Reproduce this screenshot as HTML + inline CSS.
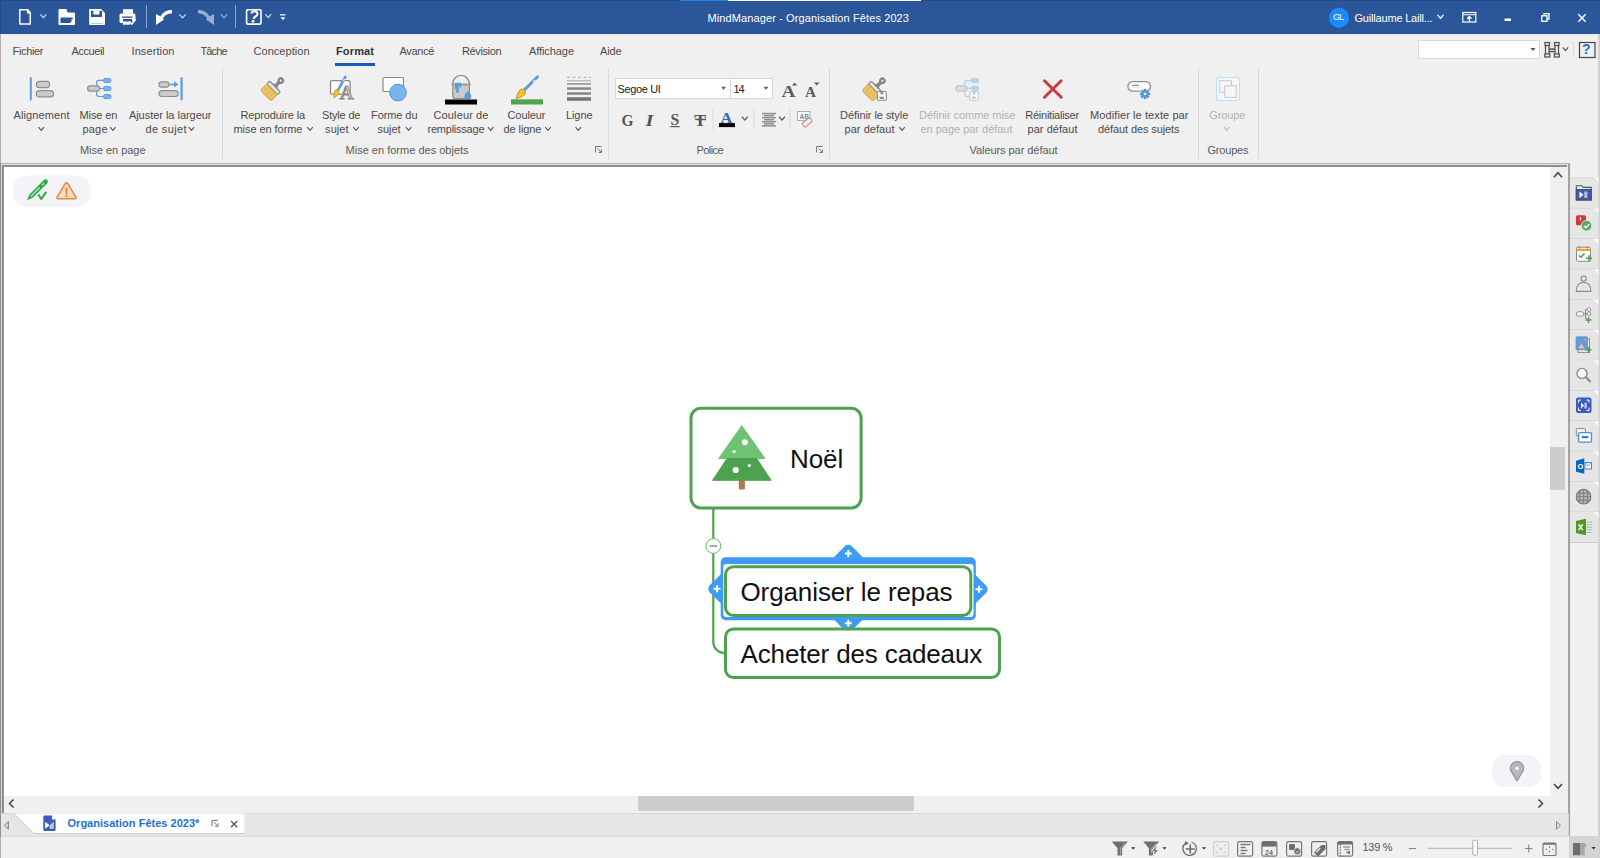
<!DOCTYPE html>
<html><head><meta charset="utf-8"><style>
html,body{margin:0;padding:0;width:1600px;height:858px;overflow:hidden;background:#f0f0f0;}
body{position:relative;font-family:"Liberation Sans",sans-serif;}
.t{position:absolute;white-space:nowrap;font-family:"Liberation Sans",sans-serif;}
.r{position:absolute;}
</style></head><body>
<div class="r" style="left:0px;top:0px;width:1600px;height:34px;background:#2b579a;"></div>
<div class="r" style="left:0px;top:0px;width:1600px;height:1px;background:#244b85;"></div>
<div class="r" style="left:0px;top:0px;width:1px;height:34px;background:#244b85;"></div>
<div class="r" style="left:0px;top:33px;width:1600px;height:1px;background:#28528f;"></div>
<div class="r" style="left:680px;top:0px;width:48px;height:1px;background:#1e88e5;"></div>
<div class="r" style="left:728px;top:0px;width:193px;height:1px;background:#ffffff;"></div>
<div class="r" style="left:0px;top:34px;width:1600px;height:130px;background:#f0f0f0;"></div>
<div class="r" style="left:0px;top:34px;width:1px;height:129px;background:#b0b0b0;"></div>
<div class="r" style="left:1598px;top:34px;width:2px;height:824px;background:#d0d0d0;"></div>
<div class="r" style="left:0px;top:163px;width:1570px;height:1px;background:#b6b6b6;"></div>
<div class="r" style="left:0px;top:164px;width:1569px;height:1px;background:#e2e2e2;"></div>
<div class="r" style="left:0px;top:163px;width:1px;height:674px;background:#909090;"></div>
<div class="r" style="left:0px;top:837px;width:1px;height:21px;background:#b0b0b0;"></div>
<div class="r" style="left:1px;top:164px;width:1px;height:649px;background:#d4d4d4;"></div>
<div class="r" style="left:2px;top:165px;width:1565px;height:2px;background:#8f8f8f;"></div>
<div class="r" style="left:2px;top:165px;width:2px;height:648px;background:#8f8f8f;"></div>
<div class="r" style="left:4px;top:167px;width:1546px;height:629px;background:#ffffff;"></div>
<div class="r" style="left:1550px;top:167px;width:18px;height:629px;background:#f0f0f0;"></div>
<div class="r" style="left:1550px;top:446.5px;width:15px;height:43.0px;background:#cdcdcd;"></div>
<div class="r" style="left:4px;top:796px;width:1564px;height:17px;background:#f0f0f0;"></div>
<div class="r" style="left:638px;top:796px;width:276px;height:15px;background:#cdcdcd;"></div>
<div class="r" style="left:1568px;top:164px;width:2px;height:672px;background:#a0a0a0;"></div>
<div class="r" style="left:1570px;top:34px;width:28px;height:824px;background:#f0f0f0;"></div>
<div class="r" style="left:1px;top:813px;width:1568px;height:23px;background:#e6e6e6;"></div>
<div class="r" style="left:1px;top:836px;width:1568px;height:22px;background:#f0f0f0;"></div>
<div class="r" style="left:1569px;top:836px;width:29px;height:22px;background:#d4d4d4;"></div>
<div class="t" style="left:707.5px;top:12.5px;font-size:11px;line-height:11px;color:#ffffff;letter-spacing:0.11px;">MindManager - Organisation Fêtes 2023</div>
<div class="t" style="left:1354.5px;top:12.5px;font-size:11px;line-height:11px;color:#ffffff;letter-spacing:-0.19px;">Guillaume Laill...</div>
<div class="t" style="left:12.5px;top:46.0px;font-size:11px;line-height:11px;color:#4a4a4a;letter-spacing:-0.33px;">Fichier</div>
<div class="t" style="left:71.5px;top:46.0px;font-size:11px;line-height:11px;color:#4a4a4a;letter-spacing:-0.41px;">Accueil</div>
<div class="t" style="left:131.5px;top:46.0px;font-size:11px;line-height:11px;color:#4a4a4a;letter-spacing:0.10px;">Insertion</div>
<div class="t" style="left:200.5px;top:46.0px;font-size:11px;line-height:11px;color:#4a4a4a;letter-spacing:-0.89px;">Tâche</div>
<div class="t" style="left:253.5px;top:46.0px;font-size:11px;line-height:11px;color:#4a4a4a;letter-spacing:0.04px;">Conception</div>
<div class="t" style="left:399.5px;top:46.0px;font-size:11px;line-height:11px;color:#4a4a4a;letter-spacing:-0.30px;">Avancé</div>
<div class="t" style="left:462.0px;top:46.0px;font-size:11px;line-height:11px;color:#4a4a4a;letter-spacing:-0.38px;">Révision</div>
<div class="t" style="left:529.0px;top:46.0px;font-size:11px;line-height:11px;color:#4a4a4a;letter-spacing:-0.08px;">Affichage</div>
<div class="t" style="left:600.0px;top:46.0px;font-size:11px;line-height:11px;color:#4a4a4a;letter-spacing:-0.17px;">Aide</div>
<div class="t" style="left:336.0px;top:46.0px;font-size:11px;line-height:11px;color:#333333;letter-spacing:0.14px;font-weight:bold;">Format</div>
<div class="r" style="left:335px;top:63px;width:40px;height:3px;background:#185abd;"></div>
<div class="t" style="left:13.5px;top:109.5px;font-size:11px;line-height:11px;color:#4a4a4a;letter-spacing:0.11px;">Alignement</div>
<div class="t" style="left:79.5px;top:109.5px;font-size:11px;line-height:11px;color:#4a4a4a;letter-spacing:-0.09px;">Mise en</div>
<div class="t" style="left:128.9px;top:109.5px;font-size:11px;line-height:11px;color:#4a4a4a;letter-spacing:-0.03px;">Ajuster la largeur</div>
<div class="t" style="left:240.5px;top:109.5px;font-size:11px;line-height:11px;color:#4a4a4a;letter-spacing:-0.12px;">Reproduire la</div>
<div class="t" style="left:322.0px;top:109.5px;font-size:11px;line-height:11px;color:#4a4a4a;letter-spacing:-0.18px;">Style de</div>
<div class="t" style="left:371.0px;top:109.5px;font-size:11px;line-height:11px;color:#4a4a4a;letter-spacing:-0.08px;">Forme du</div>
<div class="t" style="left:433.5px;top:109.5px;font-size:11px;line-height:11px;color:#4a4a4a;letter-spacing:0.13px;">Couleur de</div>
<div class="t" style="left:507.5px;top:109.5px;font-size:11px;line-height:11px;color:#4a4a4a;letter-spacing:-0.09px;">Couleur</div>
<div class="t" style="left:566.0px;top:109.5px;font-size:11px;line-height:11px;color:#4a4a4a;letter-spacing:-0.10px;">Ligne</div>
<div class="t" style="left:840.1px;top:109.5px;font-size:11px;line-height:11px;color:#4a4a4a;letter-spacing:-0.06px;">Définir le style</div>
<div class="t" style="left:1025.3px;top:109.5px;font-size:11px;line-height:11px;color:#4a4a4a;letter-spacing:-0.25px;">Réinitialiser</div>
<div class="t" style="left:1090.1px;top:109.5px;font-size:11px;line-height:11px;color:#4a4a4a;letter-spacing:0.09px;">Modifier le texte par</div>
<div class="t" style="left:919.1px;top:109.5px;font-size:11px;line-height:11px;color:#b0b0b0;letter-spacing:-0.05px;">Définir comme mise</div>
<div class="t" style="left:1209.2px;top:109.5px;font-size:11px;line-height:11px;color:#b0b0b0;letter-spacing:-0.08px;">Groupe</div>
<div class="t" style="left:82.5px;top:123.5px;font-size:11px;line-height:11px;color:#4a4a4a;letter-spacing:0.18px;">page</div>
<div class="t" style="left:145.5px;top:123.5px;font-size:11px;line-height:11px;color:#4a4a4a;letter-spacing:0.35px;">de sujet</div>
<div class="t" style="left:233.5px;top:123.5px;font-size:11px;line-height:11px;color:#4a4a4a;letter-spacing:-0.06px;">mise en forme</div>
<div class="t" style="left:325.1px;top:123.5px;font-size:11px;line-height:11px;color:#4a4a4a;letter-spacing:0.04px;">sujet</div>
<div class="t" style="left:377.5px;top:123.5px;font-size:11px;line-height:11px;color:#4a4a4a;letter-spacing:-0.06px;">sujet</div>
<div class="t" style="left:427.5px;top:123.5px;font-size:11px;line-height:11px;color:#4a4a4a;letter-spacing:-0.23px;">remplissage</div>
<div class="t" style="left:503.5px;top:123.5px;font-size:11px;line-height:11px;color:#4a4a4a;letter-spacing:-0.08px;">de ligne</div>
<div class="t" style="left:844.5px;top:123.5px;font-size:11px;line-height:11px;color:#4a4a4a;letter-spacing:0.05px;">par defaut</div>
<div class="t" style="left:1027.5px;top:123.5px;font-size:11px;line-height:11px;color:#4a4a4a;letter-spacing:0.05px;">par défaut</div>
<div class="t" style="left:1098.1px;top:123.5px;font-size:11px;line-height:11px;color:#4a4a4a;letter-spacing:-0.11px;">défaut des sujets</div>
<div class="t" style="left:920.5px;top:123.5px;font-size:11px;line-height:11px;color:#b0b0b0;letter-spacing:-0.02px;">en page par défaut</div>
<div class="t" style="left:80.0px;top:144.8px;font-size:11px;line-height:11px;color:#5a5a5a;letter-spacing:-0.05px;">Mise en page</div>
<div class="t" style="left:345.5px;top:144.8px;font-size:11px;line-height:11px;color:#5a5a5a;letter-spacing:0.01px;">Mise en forme des objets</div>
<div class="t" style="left:696.5px;top:144.8px;font-size:11px;line-height:11px;color:#5a5a5a;letter-spacing:-0.59px;">Police</div>
<div class="t" style="left:969.5px;top:144.8px;font-size:11px;line-height:11px;color:#5a5a5a;letter-spacing:-0.06px;">Valeurs par défaut</div>
<div class="t" style="left:1207.5px;top:144.8px;font-size:11px;line-height:11px;color:#5a5a5a;letter-spacing:-0.20px;">Groupes</div>
<div class="r" style="left:222px;top:68px;width:1px;height:91px;background:#dadada;"></div>
<div class="r" style="left:608px;top:68px;width:1px;height:91px;background:#dadada;"></div>
<div class="r" style="left:829px;top:68px;width:1px;height:91px;background:#dadada;"></div>
<div class="r" style="left:1198px;top:68px;width:1px;height:91px;background:#dadada;"></div>
<div class="r" style="left:1258px;top:68px;width:1px;height:91px;background:#dadada;"></div>
<svg style="position:absolute;left:0;top:0" width="1600" height="858" viewBox="0 0 1600 858"><path d="M19.75,9.75 H27.6 L30.25,12.6 V24 H19.75 Z" fill="none" stroke="#fff" stroke-width="1.5" stroke-linejoin="round"/>
<path d="M27,9.5 V13.5 H31 Z" fill="#fff"/>
<path d="M40.3,14.3 L43.3,17.7 L46.3,14.3" fill="none" stroke="#d6e0f0" stroke-width="1.1"/>
<path d="M58.5,10 Q58.5,9 59.5,9 H66.5 L67.5,12.5 H74 Q75,12.5 75,13.5 V24 Q75,25 74,25 H59.5 Q58.5,25 58.5,24 Z" fill="#fff"/>
<path d="M60.5,17.5 H72 Q73,17.5 73,19 L71,19.5 L72,21 L70,23 H60.5 Z" fill="#2b579a"/>
<path d="M70.5,22.5 L73.5,20 V23 Z" fill="#fff"/>
<path d="M89.2,9.5 Q89.2,9 90,9 H101 L105,13 V24 Q105,25 104,25 H90 Q89.2,25 89.2,24 Z" fill="#fff"/>
<rect x="91" y="10.8" width="11" height="6.2" fill="#2b579a"/>
<rect x="93.3" y="10.8" width="6.2" height="3.8" rx="0.8" fill="#fff"/>
<rect x="91" y="23" width="12.2" height="0.7" fill="#9fb3d6"/>
<rect x="123" y="9.2" width="10" height="4.5" fill="#fff"/>
<path d="M119.5,15 Q119.5,13.5 121,13.5 H134 Q135.5,13.5 135.5,15 V21 H132 V19 H123 V23 H121 Q119.5,23 119.5,21.5 Z" fill="#fff"/>
<rect x="122" y="16.5" width="10.5" height="1.3" fill="#2b579a"/>
<rect x="123" y="21.5" width="7" height="3.2" fill="#fff"/>
<path d="M129.5,21.5 L131.8,24 L135.5,19.5" fill="none" stroke="#fff" stroke-width="1.7"/>
<rect x="146" y="5" width="1" height="23" fill="#8aa3cc"/>
<rect x="235" y="5" width="1" height="23" fill="#8aa3cc"/>
<path d="M172,10 C166.5,10 162.5,12.5 160.5,16.5 L156,14 V25 L164,19.5 L162.8,18.6 C164.5,15.5 167.5,13.3 172,13.3 Z" fill="#fff"/>
<path d="M179.3,14.3 L182.55,17.900000000000002 L185.8,14.3" fill="none" stroke="#d6e0f0" stroke-width="1.1"/>
<path d="M198,10 C203.5,10 207.5,12.5 209.5,16.5 L214,14 V25 L206,19.5 L207.2,18.6 C205.5,15.5 202.5,13.3 198,13.3 Z" fill="#98aed3"/>
<path d="M221,14.3 L224.1,17.900000000000002 L227.2,14.3" fill="none" stroke="#98aed3" stroke-width="1.1"/>
<rect x="246.6" y="9.7" width="14.4" height="14.4" rx="1" fill="none" stroke="#fff" stroke-width="1.6"/>
<path d="M251.3,13.5 Q252,11.3 254.5,11.3 Q257.5,11.3 257.5,13.8 Q257.5,15.5 255.5,16.5 Q254,17.3 253.5,19" fill="none" stroke="#fff" stroke-width="2"/>
<circle cx="253" cy="21.3" r="1.4" fill="#fff"/>
<path d="M265.3,14.2 L268.2,17.599999999999998 L271.1,14.2" fill="none" stroke="#d6e0f0" stroke-width="1.1"/>
<rect x="280" y="14.2" width="5.5" height="1.2" fill="#fff"/>
<path d="M280.5,17.3 H285.3 L282.9,20.2 Z" fill="#fff"/>
<circle cx="1339" cy="17.8" r="10" fill="#1a8cff"/>
<path d="M1437.5,14.8 L1440.5,18.400000000000002 L1443.5,14.8" fill="none" stroke="#e6ecf5" stroke-width="1.4"/>
<rect x="1462.8" y="12.5" width="13" height="9.5" fill="none" stroke="#fff" stroke-width="1.2"/>
<rect x="1462.8" y="14.2" width="13" height="1" fill="#fff"/>
<path d="M1469.3,21.5 V16.8 M1467.2,18.8 L1469.3,16.4 L1471.4,18.8" fill="none" stroke="#fff" stroke-width="1.3"/>
<rect x="1504.5" y="18.5" width="6.5" height="2.5" fill="#fff"/>
<rect x="1541.7" y="15.8" width="5.3" height="5.5" fill="none" stroke="#fff" stroke-width="1.3"/>
<path d="M1544,15.3 V13.7 H1549 V19 H1547.5" fill="none" stroke="#fff" stroke-width="1.3"/>
<path d="M1578.3,14.3 L1585.7,21.7 M1585.7,14.3 L1578.3,21.7" stroke="#fff" stroke-width="1.5"/>
<rect x="1418.5" y="40.5" width="121" height="18" fill="#fff" stroke="#d9d9d9" stroke-width="1"/>
<path d="M1530.5,48 H1535.5 L1533,51 Z" fill="#555"/>
<g fill="none" stroke="#555" stroke-width="1.3"><rect x="1545" y="42.5" width="4.5" height="3"/><rect x="1554.5" y="42.5" width="4.5" height="3"/><path d="M1545.5,45.5 V54 M1549,45.5 V54 M1555,45.5 V54 M1558.5,45.5 V54"/><rect x="1544.8" y="54" width="5" height="3"/><rect x="1554.3" y="54" width="5" height="3"/><path d="M1549,49 H1555 M1549,51.5 H1555"/></g>
<path d="M1562.8,47.3 L1565.5,50.599999999999994 L1568.2,47.3" fill="none" stroke="#555" stroke-width="1.2"/>
<rect x="1573" y="42" width="1" height="16" fill="#dcdcdc"/>
<rect x="1579.5" y="42.5" width="15.5" height="15" fill="none" stroke="#444" stroke-width="1.2"/>
<path d="M38.5,127.2 L41.25,130.4 L44.0,127.2" fill="none" stroke="#555" stroke-width="1.1"/>
<path d="M110.2,127.2 L112.95,130.4 L115.7,127.2" fill="none" stroke="#555" stroke-width="1.1"/>
<path d="M188.8,127.2 L191.55,130.4 L194.3,127.2" fill="none" stroke="#555" stroke-width="1.1"/>
<path d="M307.3,127.2 L310.05,130.4 L312.8,127.2" fill="none" stroke="#555" stroke-width="1.1"/>
<path d="M353.2,127.2 L355.95,130.4 L358.7,127.2" fill="none" stroke="#555" stroke-width="1.1"/>
<path d="M405.8,127.2 L408.55,130.4 L411.3,127.2" fill="none" stroke="#555" stroke-width="1.1"/>
<path d="M488,127.2 L490.75,130.4 L493.5,127.2" fill="none" stroke="#555" stroke-width="1.1"/>
<path d="M545.2,127.2 L547.95,130.4 L550.7,127.2" fill="none" stroke="#555" stroke-width="1.1"/>
<path d="M575.5,127.2 L578.25,130.4 L581.0,127.2" fill="none" stroke="#555" stroke-width="1.1"/>
<path d="M899.3,127.2 L902.05,130.4 L904.8,127.2" fill="none" stroke="#555" stroke-width="1.1"/>
<path d="M1224,127.2 L1226.75,130.4 L1229.5,127.2" fill="none" stroke="#b5b5b5" stroke-width="1.1"/>
<rect x="29.8" y="77" width="2" height="23.5" rx="1" fill="#5b9be0"/>
<rect x="36.3" y="81.4" width="13.3" height="6.2" rx="3.1" fill="#cbcbcb" stroke="#8e8e8e" stroke-width="1.2"/>
<rect x="36.3" y="90.6" width="17.3" height="6.2" rx="3.1" fill="#cbcbcb" stroke="#8e8e8e" stroke-width="1.2"/>
<path d="M103.5,80.3 H99 Q96.6,80.3 96.6,82.7 V94.1 Q96.6,96.5 99,96.5 H103.5 M99.5,88.5 H103.5" fill="none" stroke="#5b9be0" stroke-width="1.2"/>
<rect x="87.6" y="85.8" width="12" height="5.4" rx="2.7" fill="#cbcbcb" stroke="#8e8e8e" stroke-width="1.2"/>
<rect x="103.6" y="78.5" width="7.3" height="4" rx="1.5" fill="#7ab4ea" stroke="#5b9be0" stroke-width="1"/>
<rect x="103.6" y="86.6" width="7.3" height="4" rx="1.5" fill="#7ab4ea" stroke="#5b9be0" stroke-width="1"/>
<rect x="103.6" y="94.6" width="7.3" height="4" rx="1.5" fill="#7ab4ea" stroke="#5b9be0" stroke-width="1"/>
<rect x="159" y="81.8" width="10" height="5.4" rx="2.7" fill="#cbcbcb" stroke="#8e8e8e" stroke-width="1.2"/>
<rect x="159" y="90.7" width="19.2" height="5.8" rx="2.9" fill="#cbcbcb" stroke="#8e8e8e" stroke-width="1.2"/>
<path d="M169.5,84.5 H175" stroke="#5b9be0" stroke-width="1.6"/><path d="M174,81.3 L178.5,84.5 L174,87.5 Z" fill="#5b9be0"/>
<rect x="180.5" y="77.3" width="2.2" height="23.2" rx="1" fill="#5b9be0"/>
<g transform="translate(280.8,80.6) rotate(45)"><circle cx="0" cy="0" r="3.3" fill="#858585"/><circle cx="0" cy="0" r="1.1" fill="#f0f0f0"/><path d="M-1.7,2.5 V5.5 Q-1.7,7.8 -6,8.3 H6 Q1.7,7.8 1.7,5.5 V2.5 Z" fill="#858585"/><rect x="-7.6" y="8.2" width="15.2" height="4" rx="1" fill="#e4e4e4" stroke="#858585" stroke-width="1.2"/><path d="M-7.6,12.5 H7.6 V20.3 Q6,22 4,21 Q2,22.3 0,21 Q-2,22.3 -4,21 Q-6,22 -7.6,20.3 Z" fill="#edc265" stroke="#cf9b3e" stroke-width="0.9"/><path d="M-4,14.5 V18 M0,15 V19 M3.5,14.5 V18" stroke="#d4a24a" stroke-width="0.6"/></g>
<rect x="330.5" y="80.6" width="19.6" height="13.6" rx="1.5" fill="#fff" stroke="#8a8a8a" stroke-width="1.3"/>
<text x="339.6" y="98.6" font-family="Liberation Serif" font-size="19" fill="#fff" stroke="#8a8a8a" stroke-width="1.1" textLength="14.2" lengthAdjust="spacingAndGlyphs">A</text>
<path d="M345.3,76.8 L338.2,89.8" stroke="#5b9be0" stroke-width="2.6" stroke-linecap="round"/>
<path d="M343.4,79.6 L344.6,80.4" stroke="#fff" stroke-width="2"/>
<path d="M336.8,89.5 Q339.5,90.5 338.8,92.8 Q337.5,96 334,97.8 Q333.5,93.5 334.6,91 Q335.3,89.5 336.8,89.5 Z" fill="#f2c230" stroke="#c9901e" stroke-width="0.8"/>
<rect x="383" y="77.5" width="20.5" height="14" rx="1.5" fill="#fff" stroke="#8a8a8a" stroke-width="1.2"/>
<circle cx="398" cy="92.6" r="8.3" fill="#7ab4ea" stroke="#4a90e2" stroke-width="1"/>
<path d="M452.6,84.5 A8.4,9.2 0 0 1 469.4,84.5" fill="none" stroke="#8a8a8a" stroke-width="1.3"/>
<path d="M452.8,84.5 H469.4 V96 Q469.4,98.5 467,98.5 H455.2 Q452.8,98.5 452.8,96 Z" fill="#cbcbcb" stroke="#8a8a8a" stroke-width="1.2"/>
<rect x="451.3" y="83.6" width="19.6" height="1.8" rx="0.9" fill="#9a9a9a"/>
<path d="M455,82.8 H461.2 V88.3 H460 V86.3 H458.8 V92.8 H456.2 V89 H455 Z" fill="#5b9be0"/>
<path d="M467.8,90.8 Q471.3,94.3 471.3,96 A3.5,3.5 0 0 1 464.3,96 Q464.3,94.3 467.8,90.8 Z" fill="#5b9be0"/>
<rect x="445" y="99.5" width="32" height="5" fill="#000"/>
<path d="M537.6,76.8 L524.2,90" stroke="#5b9be0" stroke-width="3" stroke-linecap="round"/>
<path d="M533.6,80.7 L535.2,82.2" stroke="#e0e0e0" stroke-width="3.2"/>
<path d="M522.3,88.8 Q526.5,90.3 525.5,93.2 Q524,96.8 516.2,98.6 Q516.5,94.5 518.8,91.5 Q520.3,89 522.3,88.8 Z" fill="#f2c230" stroke="#c9901e" stroke-width="0.9"/>
<rect x="511" y="99.3" width="32" height="5.2" fill="#4fa64f"/>
<path d="M567,77.3 H591" stroke="#b0b0b0" stroke-width="1" stroke-dasharray="3,2.5"/>
<rect x="567" y="80.3" width="24" height="1" fill="#a8a8a8"/>
<rect x="567" y="83" width="24" height="1.8" fill="#a0a0a0"/>
<rect x="567" y="87.3" width="24" height="2.5" fill="#888"/>
<rect x="567" y="92.2" width="24" height="2.6" fill="#888"/>
<rect x="567" y="97.2" width="24" height="3.6" fill="#777"/>
<path d="M595.5,152.5 V146.5 H601.5" fill="none" stroke="#777" stroke-width="1"/><path d="M597.5,148.5 L601.5,152.5 M601.5,149.5 V152.5 H598.5" fill="none" stroke="#777" stroke-width="1"/>
<path d="M816.5,152.5 V146.5 H822.5" fill="none" stroke="#777" stroke-width="1"/><path d="M818.5,148.5 L822.5,152.5 M822.5,149.5 V152.5 H819.5" fill="none" stroke="#777" stroke-width="1"/>
<rect x="615.5" y="78.5" width="115" height="20" fill="#fff" stroke="#d6d6d6" stroke-width="1"/>
<rect x="730.5" y="78.5" width="42" height="20" fill="#fff" stroke="#d6d6d6" stroke-width="1"/>
<path d="M721.2,86.8 H726 L723.6,89.9 Z" fill="#666"/>
<path d="M763.6,86.8 H768.4 L766,89.9 Z" fill="#666"/>
<text x="781.5" y="96.8" font-family="Liberation Serif" font-weight="bold" font-size="16" fill="#5a5a5a" textLength="14" lengthAdjust="spacingAndGlyphs">A</text>
<path d="M792,85.6 L794.6,82.6 L797.2,85.6 Z" fill="#5a5a5a"/>
<text x="805" y="96.8" font-family="Liberation Serif" font-weight="bold" font-size="14.5" fill="#5a5a5a" textLength="11" lengthAdjust="spacingAndGlyphs">A</text>
<path d="M814,82.6 H819.6 L816.8,85.4 Z" fill="#5a5a5a"/>
<text x="621.5" y="125.6" font-family="Liberation Serif" font-weight="bold" font-size="17.5" fill="#555" textLength="12" lengthAdjust="spacingAndGlyphs">G</text>
<text x="645.5" y="125.6" font-family="Liberation Serif" font-weight="bold" font-style="italic" font-size="17.5" fill="#555" textLength="8" lengthAdjust="spacingAndGlyphs">I</text>
<text x="670.5" y="125.3" font-family="Liberation Serif" font-weight="bold" font-size="17" fill="#555" textLength="8.8" lengthAdjust="spacingAndGlyphs">S</text>
<rect x="670.3" y="126" width="9.3" height="1.2" fill="#555"/>
<text x="694.3" y="125.6" font-family="Liberation Serif" font-weight="bold" font-size="17.5" fill="#555" textLength="11.8" lengthAdjust="spacingAndGlyphs">T</text>
<rect x="695" y="118.7" width="11" height="1.5" fill="#2e5fa0"/>
<rect x="712.5" y="108" width="1" height="22" fill="#dcdcdc"/>
<text x="720.5" y="122.6" font-family="Liberation Serif" font-weight="bold" font-size="15.5" fill="#2b6cb5" textLength="11.8" lengthAdjust="spacingAndGlyphs">A</text>
<rect x="719" y="123.1" width="16" height="4" fill="#000"/>
<path d="M741.8,116.7 L744.8,120.0 L747.8,116.7" fill="none" stroke="#555" stroke-width="1.2"/>
<rect x="753.3" y="108" width="1" height="22" fill="#dcdcdc"/>
<rect x="762" y="112.8" width="14" height="1.5" fill="#8d8d8d"/>
<rect x="764" y="114.85" width="10" height="1.5" fill="#8d8d8d"/>
<rect x="762" y="116.89999999999999" width="14" height="1.5" fill="#8d8d8d"/>
<rect x="764" y="118.95" width="10" height="1.5" fill="#8d8d8d"/>
<rect x="762" y="121.0" width="14" height="1.5" fill="#8d8d8d"/>
<rect x="764" y="123.05" width="10" height="1.5" fill="#8d8d8d"/>
<rect x="762" y="125.1" width="14" height="1.5" fill="#8d8d8d"/>
<path d="M779,116.7 L782.0,120.0 L785,116.7" fill="none" stroke="#555" stroke-width="1.2"/>
<rect x="789.3" y="108" width="1" height="22" fill="#dcdcdc"/>
<rect x="797.5" y="111.5" width="12.5" height="9" fill="#fff" stroke="#9fb0b8" stroke-width="1"/>
<text x="799.5" y="118.5" font-family="Liberation Sans" font-size="6.5" fill="#5a8ab5" font-weight="bold">AB</text>
<g transform="translate(807,122.5) rotate(-40)"><rect x="-5" y="-2.5" width="10" height="5" rx="1.5" fill="#fbe9ea" stroke="#c88084" stroke-width="1"/></g>
<g transform="translate(882.4,80.8) rotate(45)"><circle cx="0" cy="0" r="3.3" fill="#858585"/><circle cx="0" cy="0" r="1.1" fill="#f0f0f0"/><path d="M-1.7,2.5 V5.5 Q-1.7,7.8 -6,8.3 H6 Q1.7,7.8 1.7,5.5 V2.5 Z" fill="#858585"/><rect x="-7.6" y="8.2" width="15.2" height="4" rx="1" fill="#e4e4e4" stroke="#858585" stroke-width="1.2"/><path d="M-7.6,12.5 H7.6 V20.3 Q6,22 4,21 Q2,22.3 0,21 Q-2,22.3 -4,21 Q-6,22 -7.6,20.3 Z" fill="#edc265" stroke="#cf9b3e" stroke-width="0.9"/><path d="M-4,14.5 V18 M0,15 V19 M3.5,14.5 V18" stroke="#d4a24a" stroke-width="0.6"/></g>
<rect x="877.3" y="91.5" width="9" height="8.8" rx="1.2" fill="#fff" stroke="#8a8a8a" stroke-width="1.1"/>
<rect x="880.5" y="91.5" width="2.6" height="2.8" fill="#8a8a8a"/>
<rect x="879.3" y="96.7" width="5" height="2.2" rx="1.1" fill="#8a8a8a"/>
<path d="M971,80.6 H967 Q964.6,80.6 964.6,83 V94.3 Q964.6,96.6 967,96.6 H970" fill="none" stroke="#b3d3f2" stroke-width="1.2"/><path d="M967.5,88.3 H971" stroke="#b3d3f2" stroke-width="1.2"/>
<rect x="955.8" y="85.8" width="11.2" height="5.4" rx="2.7" fill="#dedede" stroke="#c6c6c6" stroke-width="1.2"/>
<rect x="971.3" y="78.3" width="7.3" height="4.3" rx="1.8" fill="#b5d4f0" stroke="#a8cbef" stroke-width="0.8"/>
<rect x="971.3" y="86.2" width="7.3" height="4.3" rx="1.8" fill="#b5d4f0" stroke="#a8cbef" stroke-width="0.8"/>
<rect x="969.7" y="91.8" width="8.6" height="8.4" rx="1.2" fill="#fff" stroke="#c8c8c8" stroke-width="1.1"/>
<rect x="972.7" y="91.8" width="2.6" height="2.8" fill="#c8c8c8"/>
<rect x="971.7" y="96.60000000000001" width="4.6" height="2.2" rx="1.1" fill="#c8c8c8"/>
<path d="M1044.5,80.8 L1061.2,97.3 M1061.2,80.8 L1044.5,97.3" stroke="#d0393b" stroke-width="3" stroke-linecap="round"/>
<rect x="1127.9" y="81.6" width="22.6" height="9.6" rx="4.8" fill="#fff" stroke="#8d8d8d" stroke-width="1.3"/>
<rect x="1132" y="84.7" width="7" height="1.3" rx="0.6" fill="#5b9be0"/><rect x="1132" y="86.9" width="9.5" height="0.6" fill="#d0d0d0"/>
<circle cx="1145" cy="94" r="5.6" fill="#f0f0f0"/>
<g transform="translate(1145,94)" fill="#5596db"><rect x="-1.25" y="-5.1" width="2.5" height="3" transform="rotate(0)"/><rect x="-1.25" y="-5.1" width="2.5" height="3" transform="rotate(45)"/><rect x="-1.25" y="-5.1" width="2.5" height="3" transform="rotate(90)"/><rect x="-1.25" y="-5.1" width="2.5" height="3" transform="rotate(135)"/><rect x="-1.25" y="-5.1" width="2.5" height="3" transform="rotate(180)"/><rect x="-1.25" y="-5.1" width="2.5" height="3" transform="rotate(225)"/><rect x="-1.25" y="-5.1" width="2.5" height="3" transform="rotate(270)"/><rect x="-1.25" y="-5.1" width="2.5" height="3" transform="rotate(315)"/><circle r="3.4"/></g><circle cx="1145" cy="94" r="1.3" fill="#f0f0f0"/>
<rect x="1216.5" y="77.5" width="23" height="23" rx="3" fill="#f6f6f6" stroke="#b6e3f3" stroke-width="1.1"/>
<rect x="1219.7" y="80.7" width="11.6" height="11.6" fill="#f6f6f6" stroke="#c8c8c8" stroke-width="1"/>
<rect x="1224.7" y="85.8" width="11.6" height="11.6" fill="#f6f6f6" stroke="#c8c8c8" stroke-width="1"/>
<rect x="691" y="408.2" width="170.1" height="99.9" rx="10" fill="#fff" stroke="#4ea24f" stroke-width="3"/>
<path d="M741.8,425.7 L765,458.5 H718.7 Z" fill="#6fc273" stroke="#6fc273" stroke-width="1" stroke-linejoin="round"/>
<path d="M727,458.5 H756.7 L771.1,480.3 H712.6 Z" fill="#4ea24f" stroke="#4ea24f" stroke-width="1" stroke-linejoin="round"/>
<rect x="738.8" y="480" width="6.1" height="9.5" rx="1.2" fill="#a97c50"/>
<circle cx="744.9" cy="442.3" r="3" fill="#fff"/>
<circle cx="734.1" cy="451.6" r="1.6" fill="#fff"/>
<circle cx="735.7" cy="470" r="3.1" fill="#fff"/>
<circle cx="749.4" cy="465.5" r="1.6" fill="#fff"/>
<path d="M713.3,509 V642 A11,11 0 0 0 724.3,653 H726" fill="none" stroke="#4ea24f" stroke-width="2.2"/>
<rect x="720.7" y="557.3" width="255.1" height="62.9" rx="5" fill="#3d9af5"/>
<rect x="723.3" y="564.1" width="250.2" height="53" rx="3" fill="#fff"/>
<rect x="725.5" y="566.7" width="245.3" height="48.8" rx="8" fill="#fff" stroke="#4ea24f" stroke-width="3"/>
<g transform="translate(848.3,553.5) rotate(0)"><path d="M-15,4.3 L-3.5,-7.3 Q0,-10.2 3.5,-7.3 L15,4.3 Z" fill="#3d9af5"/><path d="M-3.5,0 H3.5 M0,-3.5 V3.5" stroke="#fff" stroke-width="2"/></g>
<g transform="translate(848.3,623.2) rotate(180)"><path d="M-15,4.3 L-3.5,-7.3 Q0,-10.2 3.5,-7.3 L15,4.3 Z" fill="#3d9af5"/><path d="M-3.5,0 H3.5 M0,-3.5 V3.5" stroke="#fff" stroke-width="2"/></g>
<g transform="translate(717,588.8) rotate(-90)"><path d="M-15,4.3 L-3.5,-7.3 Q0,-10.2 3.5,-7.3 L15,4.3 Z" fill="#3d9af5"/><path d="M-3.5,0 H3.5 M0,-3.5 V3.5" stroke="#fff" stroke-width="2"/></g>
<g transform="translate(979,589.3) rotate(90)"><path d="M-15,4.3 L-3.5,-7.3 Q0,-10.2 3.5,-7.3 L15,4.3 Z" fill="#3d9af5"/><path d="M-3.5,0 H3.5 M0,-3.5 V3.5" stroke="#fff" stroke-width="2"/></g>
<circle cx="713.4" cy="546" r="7.4" fill="#fff" stroke="#66b866" stroke-width="1"/>
<path d="M709.6,546 H717.2" stroke="#7a7a7a" stroke-width="1.3"/>
<rect x="725.5" y="628.9" width="274" height="48.6" rx="8" fill="#fff" stroke="#4ea24f" stroke-width="3"/>
<rect x="12" y="175.6" width="79" height="31.6" rx="15.8" fill="#f3f3f8"/>
<g transform="translate(45.6,181.6) rotate(45)"><path d="M-2.3,0 A2.3,2.3 0 0 1 2.3,0 V20.5 L0,26.5 L-2.3,20.5 Z" fill="#2eaa44"/><rect x="-0.7" y="8.5" width="1.4" height="12.5" fill="#b5e8bd"/><rect x="-0.7" y="2.5" width="1.4" height="2.5" fill="#b5e8bd"/></g>
<path d="M38.7,195 L41.3,198.8 L45.8,192.6" fill="none" stroke="#2eaa44" stroke-width="2.1" stroke-linecap="round" stroke-linejoin="round"/>
<path d="M66.5,182.8 Q67.3,182.8 67.8,183.6 L76,197.3 Q76.5,198.8 75,198.8 H58 Q56.5,198.8 57,197.3 L65.2,183.6 Q65.7,182.8 66.5,182.8 Z" fill="#f9dcc0" stroke="#e08a3c" stroke-width="1.5" stroke-linejoin="round"/>
<path d="M66.5,188.2 V193.8" stroke="#dd7a22" stroke-width="1.5" stroke-linecap="round"/><circle cx="66.5" cy="196" r="0.9" fill="#dd7a22"/>
<rect x="1492" y="755" width="49" height="32" rx="13" fill="#f3f3f8"/>
<path d="M1517,781 L1511.3,771.5 A6.6,6.6 0 1 1 1522.7,771.5 Z" fill="#b8b8b8" stroke="#8f8f8f" stroke-width="1.1" stroke-linejoin="round"/>
<circle cx="1517" cy="768.5" r="1.7" fill="#fff"/>
<path d="M1554.0,177.25 L1558,172.75 L1562.0,177.25" fill="none" stroke="#444" stroke-width="1.5"/>
<path d="M1554,784 L1558,788.3 L1562,784" fill="none" stroke="#444" stroke-width="1.5"/>
<path d="M13.5,799.5 L9.5,803.5 L13.5,807.5" fill="none" stroke="#444" stroke-width="1.5"/>
<path d="M1538.5,799.5 L1542.5,803.5 L1538.5,807.5" fill="none" stroke="#444" stroke-width="1.5"/>
<rect x="1568.7" y="164" width="1.4" height="672" fill="#a6a6a6"/>
<rect x="1598.5" y="34" width="1.5" height="824" fill="#d2d2d2"/>
<rect x="1570.1" y="178.00" width="28.4" height="30.37" fill="#e6e6e6"/>
<rect x="1570.1" y="207.90" width="28.4" height="1" fill="#c9c9c9"/>
<path d="M1593.3,178.00 H1598.5 V183.20 Z" fill="#fafafa"/>
<rect x="1570.1" y="208.37" width="28.4" height="30.37" fill="#e6e6e6"/>
<rect x="1570.1" y="238.27" width="28.4" height="1" fill="#c9c9c9"/>
<path d="M1593.3,208.37 H1598.5 V213.57 Z" fill="#fafafa"/>
<rect x="1570.1" y="238.74" width="28.4" height="30.37" fill="#e6e6e6"/>
<rect x="1570.1" y="268.64" width="28.4" height="1" fill="#c9c9c9"/>
<path d="M1593.3,238.74 H1598.5 V243.94 Z" fill="#fafafa"/>
<rect x="1570.1" y="269.11" width="28.4" height="30.37" fill="#e6e6e6"/>
<rect x="1570.1" y="299.01" width="28.4" height="1" fill="#c9c9c9"/>
<path d="M1593.3,269.11 H1598.5 V274.31 Z" fill="#fafafa"/>
<rect x="1570.1" y="299.48" width="28.4" height="30.37" fill="#e6e6e6"/>
<rect x="1570.1" y="329.38" width="28.4" height="1" fill="#c9c9c9"/>
<path d="M1593.3,299.48 H1598.5 V304.68 Z" fill="#fafafa"/>
<rect x="1570.1" y="329.85" width="28.4" height="30.37" fill="#e6e6e6"/>
<rect x="1570.1" y="359.75" width="28.4" height="1" fill="#c9c9c9"/>
<path d="M1593.3,329.85 H1598.5 V335.05 Z" fill="#fafafa"/>
<rect x="1570.1" y="360.22" width="28.4" height="30.37" fill="#e6e6e6"/>
<rect x="1570.1" y="390.12" width="28.4" height="1" fill="#c9c9c9"/>
<path d="M1593.3,360.22 H1598.5 V365.42 Z" fill="#fafafa"/>
<rect x="1570.1" y="390.59" width="28.4" height="30.37" fill="#e6e6e6"/>
<rect x="1570.1" y="420.49" width="28.4" height="1" fill="#c9c9c9"/>
<path d="M1593.3,390.59 H1598.5 V395.79 Z" fill="#fafafa"/>
<rect x="1570.1" y="420.96" width="28.4" height="30.37" fill="#e6e6e6"/>
<rect x="1570.1" y="450.86" width="28.4" height="1" fill="#c9c9c9"/>
<path d="M1593.3,420.96 H1598.5 V426.16 Z" fill="#fafafa"/>
<rect x="1570.1" y="451.33" width="28.4" height="30.37" fill="#e6e6e6"/>
<rect x="1570.1" y="481.23" width="28.4" height="1" fill="#c9c9c9"/>
<path d="M1593.3,451.33 H1598.5 V456.53 Z" fill="#fafafa"/>
<rect x="1570.1" y="481.70" width="28.4" height="30.37" fill="#e6e6e6"/>
<rect x="1570.1" y="511.60" width="28.4" height="1" fill="#c9c9c9"/>
<path d="M1593.3,481.70 H1598.5 V486.90 Z" fill="#fafafa"/>
<rect x="1570.1" y="512.07" width="28.4" height="30.37" fill="#e6e6e6"/>
<rect x="1570.1" y="541.97" width="28.4" height="1" fill="#c9c9c9"/>
<path d="M1593.3,512.07 H1598.5 V517.27 Z" fill="#fafafa"/>
<rect x="1570.1" y="177.4" width="23.5" height="1" fill="#d4d4d4"/><path d="M1593.3,177.4 L1598.5,182.8" stroke="#d4d4d4" stroke-width="1"/>
<path d="M1576.3,200.0 V185.7 H1582 L1583.3,187.4 H1591.2 V200.0 Z" fill="#e8e8e8" stroke="#555" stroke-width="1.1"/>
<rect x="1576.3" y="189.6" width="14.9" height="10.4" fill="#3b5bc4" stroke="#454b5c" stroke-width="1"/>
<path d="M1579.5,191.5 L1583.5,194.8 L1579.5,198.0 Z" fill="#fff"/><rect x="1584.3" y="191.5" width="3" height="6.5" fill="#bdbdbd"/>
<rect x="1576" y="215.37" width="10" height="10" rx="1.5" fill="#d0383c"/>
<path d="M1580.5,217.37 V220.37" stroke="#fff" stroke-width="1.3"/>
<circle cx="1586.5" cy="225.67000000000002" r="5.3" fill="#5aab5a" stroke="#f0f0f0" stroke-width="0.8"/>
<path d="M1584,225.67000000000002 L1586,227.67000000000002 L1589.3,223.87" fill="none" stroke="#fff" stroke-width="1.4"/>
<rect x="1576.5" y="247.24" width="14" height="14" rx="1" fill="#fff" stroke="#888" stroke-width="1"/>
<rect x="1576.5" y="248.74" width="14" height="2.2" fill="#f0a030"/>
<path d="M1579.5,246.24 V248.74 M1587.5,246.24 V248.74" stroke="#888" stroke-width="1"/>
<path d="M1579,255.54000000000002 L1581,257.24 L1584.5,253.44" fill="none" stroke="#4aa24a" stroke-width="1.5"/>
<path d="M1589,255.24 V261.24 M1586,258.24 H1592" stroke="#4aa24a" stroke-width="1.5"/>
<circle cx="1583.6" cy="278.61" r="2.6" fill="none" stroke="#8a8a8a" stroke-width="1.1"/>
<path d="M1576.2,291.41 Q1576.5,282.61 1583.6,282.31 Q1590.8,282.61 1591,291.41 Z" fill="none" stroke="#8a8a8a" stroke-width="1.1"/>
<rect x="1576.3" y="311.78000000000003" width="7.5" height="4.3" rx="2.1" fill="#fff" stroke="#888" stroke-width="1"/>
<path d="M1583.8,313.98 H1585.5 M1585.5,309.48 V318.48 M1585.5,309.48 H1587 M1585.5,313.68 H1587 M1585.5,318.48 H1587" fill="none" stroke="#888" stroke-width="1"/>
<circle cx="1589" cy="309.48" r="1.8" fill="#fff" stroke="#888" stroke-width="0.9"/><circle cx="1589" cy="313.68" r="1.8" fill="#fff" stroke="#888" stroke-width="0.9"/>
<path d="M1588.5,316.98 V322.98 M1585.5,319.98 H1591.5" stroke="#4aa24a" stroke-width="1.5"/>
<rect x="1578" y="338.85" width="11.5" height="13.5" fill="#f6f6f6" stroke="#888" stroke-width="1"/>
<rect x="1576" y="336.85" width="11.5" height="13" rx="0.8" fill="#5d9fe6" stroke="#6a8fbf" stroke-width="0.8"/>
<path d="M1577.5,348.85 L1581.5,342.35 L1585.5,348.85 Z" fill="#c8c8c8" stroke="#888" stroke-width="0.8"/><circle cx="1585" cy="339.85" r="1.2" fill="#f0a030"/>
<path d="M1588.5,346.85 V352.85 M1585.5,349.85 H1591.5" stroke="#4aa24a" stroke-width="1.5"/>
<circle cx="1582" cy="373.42" r="5" fill="#fff" stroke="#8a8a8a" stroke-width="1.4"/>
<path d="M1585.8,377.22 L1590,381.22" stroke="#8a8a8a" stroke-width="2.2" stroke-linecap="round"/>
<rect x="1576" y="397.59000000000003" width="15.5" height="15.5" rx="2" fill="#3b5bc4"/>
<path d="M1578.5,402.59000000000003 V400.09000000000003 H1581 M1586.5,400.09000000000003 H1589 V402.59000000000003 M1589,407.59000000000003 V410.59000000000003 H1586.5 M1581,410.59000000000003 H1578.5 V407.59000000000003" fill="none" stroke="#fff" stroke-width="1"/>
<path d="M1581,402.59000000000003 L1584,405.59000000000003 L1581,408.59000000000003 Z" fill="#fff"/><rect x="1584.5" y="402.59000000000003" width="2.2" height="6" fill="#ccc"/>
<rect x="1576.3" y="428.46000000000004" width="9" height="7.5" rx="1" fill="#f4f4f4" stroke="#888" stroke-width="1"/>
<rect x="1578.5" y="432.66" width="13" height="9.5" rx="1.2" fill="#fff" stroke="#4a90e2" stroke-width="1.3"/>
<rect x="1581.8" y="435.96000000000004" width="6.5" height="2.3" fill="#3a7bd5"/>
<path d="M1576,460.83 L1584.3,458.33 V473.83 L1576,471.83 Z" fill="#0a64c8"/>
<text x="1577.5" y="469.33" font-family="Liberation Sans" font-size="7.5" font-weight="bold" fill="#fff">O</text>
<rect x="1585" y="462.53" width="6.5" height="6.5" fill="#fff" stroke="#3a8ae0" stroke-width="1"/>
<path d="M1585.5,463.03 L1588.2,466.03 L1591,463.03" fill="none" stroke="#3a8ae0" stroke-width="0.8"/>
<circle cx="1583.6" cy="496.7" r="7.3" fill="#b4b4b4" stroke="#7a7a7a" stroke-width="1.1"/>
<path d="M1576.5,493.2 H1590.7 M1576.3,496.7 H1590.9 M1576.5,500.2 H1590.7 M1583.6,489.7 V503.7 M1580.2,490.2 Q1578.6,496.7 1580.2,503.2 M1587,490.2 Q1588.6,496.7 1587,503.2" fill="none" stroke="#7a7a7a" stroke-width="0.9"/>
<path d="M1576,521.0699999999999 L1586,518.77 V535.3699999999999 L1576,533.0699999999999 Z" fill="#4e9a1e"/>
<path d="M1578.5,524.27 L1582.8,530.0699999999999 M1582.8,524.27 L1578.5,530.0699999999999" stroke="#fff" stroke-width="1.4"/>
<path d="M1587,522.0699999999999 H1592" stroke="#7cba4a" stroke-width="1" stroke-dasharray="1.4,0.8"/>
<path d="M1587,524.67 H1592" stroke="#7cba4a" stroke-width="1" stroke-dasharray="1.4,0.8"/>
<path d="M1587,527.27 H1592" stroke="#7cba4a" stroke-width="1" stroke-dasharray="1.4,0.8"/>
<path d="M1587,529.8699999999999 H1592" stroke="#7cba4a" stroke-width="1" stroke-dasharray="1.4,0.8"/>
<path d="M1587,532.4699999999999 H1592" stroke="#7cba4a" stroke-width="1" stroke-dasharray="1.4,0.8"/>
<rect x="1" y="813" width="1568" height="0.8" fill="#d4d4d4"/>
<rect x="1" y="835.8" width="1568" height="1" fill="#d8d8d8"/>
<path d="M14,813.6 H243.5 Q244.5,813.6 244.5,814.6 V832.5 Q244.5,833.5 243.5,833.5 H34 Z" fill="#ffffff"/>
<path d="M14,813.6 L34,833.5 H244 " fill="none" stroke="#c4c4c4" stroke-width="0.9"/>
<path d="M8.3,821.5 L4.5,825.3 L8.3,829.2 Z" fill="none" stroke="#777" stroke-width="1"/>
<path d="M1556.5,821.5 L1560.5,825.3 L1556.5,829.2 Z" fill="none" stroke="#888" stroke-width="1"/>
<path d="M44.5,815.5 H51.8 L55.6,819.3 V829.8 Q55.6,831 54.4,831 H44.5 Q43.3,831 43.3,829.8 V816.7 Q43.3,815.5 44.5,815.5 Z" fill="#3d5bbf"/>
<path d="M52,815.3 V819.5 H55.8 Z" fill="#fff"/>
<path d="M45.1,821.8 L49.6,825.2 L45.1,828.8 Z" fill="#fff"/><path d="M49.6,825.2 L53.8,821.8 V828.8 H49.6 Z" fill="#c8c8c8"/>
<path d="M212,826.3 V820.3 H218" fill="none" stroke="#777" stroke-width="1"/><path d="M214,822.3 L218,826.3 M218,823.3 V826.3 H215" fill="none" stroke="#777" stroke-width="1"/>
<path d="M231,821 L237.2,827.2 M237.2,821 L231,827.2" stroke="#555" stroke-width="1.3"/>
<path d="M1111.8,841.5 H1127.8 L1122.1,848.3 V855.5 H1117.5 V848.3 Z" fill="#6e6e6e"/>
<path d="M1125.1,842.8 L1120.3999999999999,848.5 V854.5" fill="none" stroke="#c8c8c8" stroke-width="0.7"/>
<path d="M1131,847.2 H1135.4 L1133.2,849.6 Z" fill="#333"/>
<path d="M1143.2,841.5 H1159.2 L1153.5,848.3 V855.5 H1148.9 V848.3 Z" fill="#6e6e6e"/>
<path d="M1156.5,842.8 L1151.8,848.5 V854.5" fill="none" stroke="#c8c8c8" stroke-width="0.7"/>
<path d="M1156.5,844.5 L1150.8,851.3 H1154 L1152,857 L1159,849.8 H1155.8 L1158,844.5 Z" fill="#f0f0f0"/>
<path d="M1156.8,846 L1152.3,851 H1155 L1153.5,855 L1158,850.3 H1155.2 L1157,846 Z" fill="#6e6e6e"/>
<path d="M1162.3,847.2 H1166.7 L1164.5,849.6 Z" fill="#333"/>
<path d="M1185,843.5 A6.8,6.8 0 1 0 1191.5,842" fill="none" stroke="#6e6e6e" stroke-width="1.3"/>
<path d="M1185.5,840.8 L1188.8,843.8 L1184.3,845.5 Z" fill="#6e6e6e"/>
<path d="M1190.3,844.5 V853.5 M1185.8,849 H1194.8" stroke="#6e6e6e" stroke-width="1.6"/>
<path d="M1201.8,847.2 H1206.2 L1204.0,849.6 Z" fill="#333"/>
<rect x="1213.6" y="841.6" width="15" height="14.6" rx="1.8" fill="none" stroke="#cfcfcf" stroke-width="1.2"/>
<circle cx="1217" cy="845.5" r="1" fill="#d0d0d0"/>
<circle cx="1225" cy="845.5" r="1" fill="#d0d0d0"/>
<circle cx="1217" cy="852.5" r="1" fill="#d0d0d0"/>
<circle cx="1225" cy="852.5" r="1" fill="#d0d0d0"/>
<circle cx="1221" cy="849" r="1.6" fill="#d0d0d0"/>
<rect x="1237.6" y="841.6" width="15" height="14.6" rx="1.8" fill="none" stroke="#777" stroke-width="1.2"/>
<rect x="1240.5" y="843.8" width="10" height="1.4" fill="#777"/>
<rect x="1240.5" y="846.8" width="5" height="1.4" fill="#777"/>
<rect x="1240.5" y="849.8" width="7" height="1.4" fill="#777"/>
<rect x="1240.5" y="852.8" width="5" height="1.4" fill="#777"/>
<rect x="1261.8999999999999" y="841.6" width="15" height="14.6" rx="1.8" fill="none" stroke="#777" stroke-width="1.2"/>
<rect x="1262" y="842" width="14.4" height="4.6" fill="#6e6e6e"/>
<text x="1265" y="854.5" font-family="Liberation Sans" font-weight="bold" font-size="7" fill="#6e6e6e">24</text>
<rect x="1286.6" y="841.6" width="15" height="14.6" rx="1.8" fill="none" stroke="#777" stroke-width="1.2"/>
<rect x="1289" y="844" width="6" height="6" rx="1" fill="#6e6e6e"/><circle cx="1297.3" cy="851.3" r="3.5" fill="#6e6e6e" stroke="#f0f0f0" stroke-width="0.7"/><path d="M1295.8,851.3 L1297,852.5 L1299,850.3" fill="none" stroke="#f0f0f0" stroke-width="0.9"/>
<rect x="1311.6" y="841.6" width="15" height="14.6" rx="1.8" fill="none" stroke="#777" stroke-width="1.2"/>
<path d="M1314,852.5 L1321.5,845 H1325.5 V849 L1318,856.5 Z" fill="#6e6e6e"/><path d="M1316.5,852 L1320,848.5" stroke="#f0f0f0" stroke-width="1.2" stroke-linecap="round"/>
<rect x="1337.6" y="841.6" width="15" height="14.6" rx="1.8" fill="none" stroke="#777" stroke-width="1.2"/>
<rect x="1338" y="842" width="14" height="2.5" fill="#6e6e6e"/><path d="M1340.3,844.5 V855.5" stroke="#6e6e6e" stroke-width="1.2" stroke-dasharray="1.5,1"/>
<path d="M1343,847 H1350 M1344.5,849.5 H1349.5" stroke="#999" stroke-width="1.4"/><path d="M1345.5,852 L1350,854.5 V851 Z" fill="#6e6e6e"/>
<rect x="1408.8" y="848" width="7.4" height="1.1" fill="#888"/>
<rect x="1428" y="847.8" width="84.5" height="1" fill="#b0b0b0"/>
<rect x="1472.7" y="840.3" width="4.8" height="14.8" rx="0.8" fill="#f8f8f8" stroke="#a8a8a8" stroke-width="0.9"/>
<path d="M1525,848.5 H1532.5 M1528.75,844.5 V852.5" stroke="#888" stroke-width="1.1"/>
<rect x="1543" y="843" width="13" height="12.5" rx="1" fill="none" stroke="#777" stroke-width="1.1"/><rect x="1543" y="843" width="13" height="1.8" fill="#777"/>
<path d="M1549.5,846.5 V848 M1549.5,850.5 V852.5 M1545.5,849.3 H1547 M1552,849.3 H1553.6" stroke="#777" stroke-width="1"/>
<rect x="1573" y="843" width="7.5" height="12.3" fill="#6e6e6e"/><path d="M1580.5,855.3 V844.5 Q1580.5,843 1582,843 H1585 Q1586,843 1586,844.5 V847 H1584.8 V855.3 Z" fill="#a8a8a8"/>
<path d="M1591.3,847 H1595.7 L1593.5,849.4 Z" fill="#333"/></svg>
<div class="t" style="left:1333.0px;top:13.3px;font-size:9px;line-height:9px;color:#ffffff;letter-spacing:-1.00px;">GL</div>
<div class="t" style="left:617.5px;top:83.6px;font-size:11px;line-height:11px;color:#222222;letter-spacing:-0.37px;">Segoe UI</div>
<div class="t" style="left:733.5px;top:83.5px;font-size:11px;line-height:11px;color:#222222;letter-spacing:-1.23px;">14</div>
<div class="t" style="left:1582.0px;top:42.0px;font-size:14px;line-height:14px;color:#2b6cc4;font-weight:bold;">?</div>
<div class="t" style="left:790.0px;top:445.8px;font-size:26px;line-height:26px;color:#111111;letter-spacing:-0.09px;">Noël</div>
<div class="t" style="left:740.5px;top:578.5px;font-size:26px;line-height:26px;color:#111111;letter-spacing:-0.11px;">Organiser le repas</div>
<div class="t" style="left:740.5px;top:640.6px;font-size:26px;line-height:26px;color:#111111;letter-spacing:-0.14px;">Acheter des cadeaux</div>
<div class="t" style="left:67.5px;top:818.0px;font-size:11px;line-height:11px;color:#1f6fd0;letter-spacing:0.02px;font-weight:bold;">Organisation Fêtes 2023*</div>
<div class="t" style="left:1362.5px;top:842.0px;font-size:11px;line-height:11px;color:#555555;letter-spacing:-0.30px;">139 %</div>
</body></html>
